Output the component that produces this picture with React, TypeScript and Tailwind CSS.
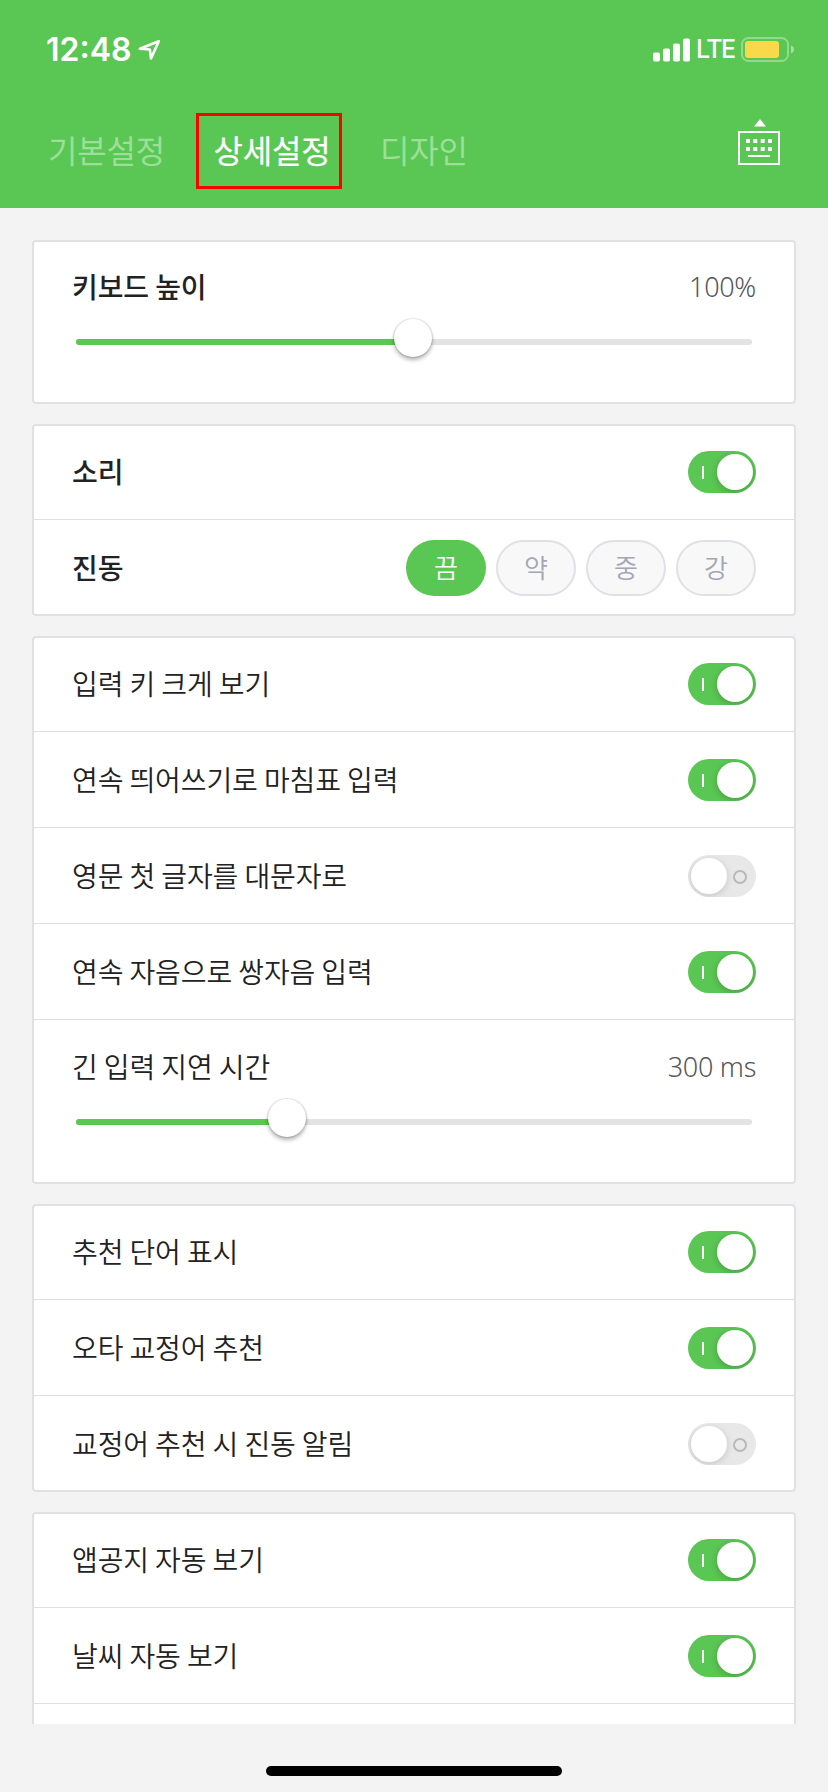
import React, { useState } from "react";
import clsx from "clsx";

interface ToggleProps {
  on: boolean;
  onChange: () => void;
}

const Toggle: React.FC<ToggleProps> = ({ on, onChange }) => (
  <button
    role="switch"
    aria-checked={on}
    onClick={onChange}
    className={clsx(
      "flex h-[42px] w-[68px] shrink-0 items-center justify-between overflow-hidden rounded-full px-[3px]",
      on ? "bg-[#5ac653] pl-3.5" : "bg-[#e8e8e8] pr-[9px]"
    )}
  >
    {on && <span className="h-[13px] w-0.5 bg-white"></span>}
    <span
      className={clsx(
        "size-9 rounded-full bg-white",
        on ? "shadow-[0_2px_7px_rgba(0,0,0,0.2)]" : "shadow-[0_2px_7px_rgba(0,0,0,0.15)]"
      )}
    ></span>
    {!on && <span className="mt-0.5 size-3.5 rounded-full border-2 border-[#b9b9b9]"></span>}
  </button>
);

interface RowProps {
  label: string;
  bold?: boolean;
  last?: boolean;
  children: React.ReactNode;
}

const Row: React.FC<RowProps> = ({ label, bold, last, children }) => (
  <div
    className={clsx(
      "flex h-24 items-center justify-between px-10",
      !last && "border-b border-[#e0e0e4] pt-px"
    )}
  >
    <span
      className={clsx(
        "pb-[3px] text-[28px] tracking-[-0.1px] text-[#222]",
        bold ? "font-medium" : "font-[350]"
      )}
    >
      {label}
    </span>
    {children}
  </div>
);

interface ToggleRowProps {
  label: string;
  initial?: boolean;
  bold?: boolean;
  last?: boolean;
}

const ToggleRow: React.FC<ToggleRowProps> = ({ label, initial = true, bold, last }) => {
  const [on, setOn] = useState(initial);
  return (
    <Row label={label} bold={bold} last={last}>
      <Toggle on={on} onChange={() => setOn(!on)} />
    </Row>
  );
};

interface SliderRowProps {
  label: string;
  value: string;
  percent: number;
  bold?: boolean;
}

const SliderRow: React.FC<SliderRowProps> = ({ label, value, percent, bold }) => (
  <div className="h-[164px] px-10 pt-[26px]">
    <div className="flex h-10 items-center justify-between">
      <span className={clsx("text-[28px] tracking-[-0.1px] text-[#222]", bold ? "font-medium" : "font-[350]")}>
        {label}
      </span>
      <span className="pt-0.5 font-['Noto_Sans',sans-serif] text-[27px] font-light tracking-[-0.3px] text-[#54585b]">
        {value}
      </span>
    </div>
    <div className="relative mx-1 mt-[33px] h-1.5 rounded-full bg-[#e3e3e3]">
      <div className="h-full rounded-full bg-[#5ac653]" style={{ width: `${percent}%` }}></div>
      <div
        className="absolute -top-5 size-[38px] -translate-x-1/2 rounded-full bg-white shadow-[0_0_1px_1px_rgba(0,0,0,0.1),0_3px_4px_rgba(0,0,0,0.3)]"
        style={{ left: `${percent}%` }}
      ></div>
    </div>
  </div>
);

const Card: React.FC<{ children: React.ReactNode }> = ({ children }) => (
  <section className="rounded bg-white outline-2 -outline-offset-2 outline-[#e0e0e6]">{children}</section>
);

const VIBRATION = ["끔", "약", "중", "강"];

const VibrationPicker: React.FC = () => {
  const [level, setLevel] = useState(0);
  return (
    <div className="flex gap-2.5">
      {VIBRATION.map((name, i) => (
        <button
          key={name}
          onClick={() => setLevel(i)}
          className={clsx(
            "flex h-14 w-20 items-center justify-center rounded-full pb-[3px] text-[26px] font-[350]",
            i === level ? "bg-[#5ac653] text-white" : "border-2 border-[#e0e0e6] bg-[#f8f8f8] text-[#a3a7b5]"
          )}
        >
          {name}
        </button>
      ))}
    </div>
  );
};

const StatusBar: React.FC = () => (
  <div className="flex h-[98px] items-center justify-between pr-[34px] pl-[46px] font-['Inter',sans-serif] text-white">
    <div className="flex items-center">
      <span className="mt-0.5 w-[85px] text-[32px] font-semibold whitespace-nowrap">12:48</span>
      <svg className="ml-[7px] size-6" viewBox="0 0 24 24" fill="none" stroke="currentColor" strokeWidth={2.6} strokeLinejoin="round">
        <path d="M20.800 4.300L1.800 11.700L11.800 12.500L13 21.500Z" />
      </svg>
    </div>
    <div className="flex items-center">
      <svg className="mt-px h-[24px] w-[37px]" viewBox="0 0 37 24" fill="currentColor">
        <rect x="0" y="14.5" width="7" height="9" rx="1.8" />
        <rect x="10" y="10.5" width="7" height="13" rx="1.8" />
        <rect x="20" y="5.5" width="7" height="18" rx="1.8" />
        <rect x="30" y="0.5" width="7" height="23" rx="1.8" />
      </svg>
      <span className="mt-0.5 ml-1.5 w-[37px] text-[25px] font-medium tracking-[-1.6px]">LTE</span>
      <svg className="ml-2 h-[25px] w-[53px]" viewBox="0 0 53 25">
        <rect x="1" y="1" width="46" height="23" rx="6.5" fill="none" stroke="#fff" strokeOpacity="0.35" strokeWidth="2" />
        <rect x="4" y="4" width="34" height="17" rx="3" fill="#f9d849" />
        <path d="M50 8.5c2 .6 3 2.200 3 4s-1 3.400-3 4z" fill="#fff" fillOpacity="0.45" />
      </svg>
    </div>
  </div>
);

const KeyboardIcon: React.FC = () => (
  <svg className="h-[46px] w-[42px]" viewBox="0 0 42 46" fill="#fff">
    <path d="M22 0L28 7.500H16Z" />
    <rect x="1" y="13" width="40" height="32" fill="none" stroke="#fff" strokeWidth="2" />
    {[20, 28].map((y) =>
      [8, 15.300, 22.700, 30].map((x) => <rect key={`${x}-${y}`} x={x} y={y} width="4" height="4" />)
    )}
    <rect x="10" y="36" width="22" height="2" />
  </svg>
);

const App: React.FC = () => (
  <div className="flex h-[1792px] w-[828px] flex-col overflow-hidden bg-[#f3f3f3] font-['Noto_Sans_CJK_KR',sans-serif]">
    <header className="h-[208px] shrink-0 bg-[#5ac653]">
      <StatusBar />
      <nav className="flex h-[110px] items-start px-12 text-[32px] tracking-[-0.2px]">
        <button className="mt-[15px] h-[76px] w-[118px] pb-1 text-left whitespace-nowrap text-[#9bdf98]">기본설정</button>
        <button className="mt-[15px] ml-[30px] h-[76px] w-[146px] border-[3px] border-[#f00] pb-1 pl-1.5 whitespace-nowrap text-white [-webkit-text-stroke:0.2px_white]">
          상세설정
        </button>
        <button className="mt-[15px] ml-[38px] h-[76px] pb-1 text-[#9bdf98]">디자인</button>
        <button aria-label="키보드" className="mt-[21px] ml-auto">
          <KeyboardIcon />
        </button>
      </nav>
    </header>

    <main className="flex h-[1516px] shrink-0 flex-col gap-5 overflow-hidden px-8 pt-8">
      <Card>
        <SliderRow label="키보드 높이" value="100%" percent={49.9} bold />
      </Card>

      <Card>
        <ToggleRow label="소리" bold />
        <Row label="진동" bold last>
          <VibrationPicker />
        </Row>
      </Card>

      <Card>
        <ToggleRow label="입력 키 크게 보기" />
        <ToggleRow label="연속 띄어쓰기로 마침표 입력" />
        <ToggleRow label="영문 첫 글자를 대문자로" initial={false} />
        <ToggleRow label="연속 자음으로 쌍자음 입력" />
        <SliderRow label="긴 입력 지연 시간" value="300 ms" percent={31.2} />
      </Card>

      <Card>
        <ToggleRow label="추천 단어 표시" />
        <ToggleRow label="오타 교정어 추천" />
        <ToggleRow label="교정어 추천 시 진동 알림" initial={false} last />
      </Card>

      <Card>
        <ToggleRow label="앱공지 자동 보기" />
        <ToggleRow label="날씨 자동 보기" />
        <div className="h-24"></div>
      </Card>
    </main>

    <div className="mx-auto mt-[42px] h-2.5 w-[296px] rounded-full bg-black"></div>
  </div>
);

export default App;
